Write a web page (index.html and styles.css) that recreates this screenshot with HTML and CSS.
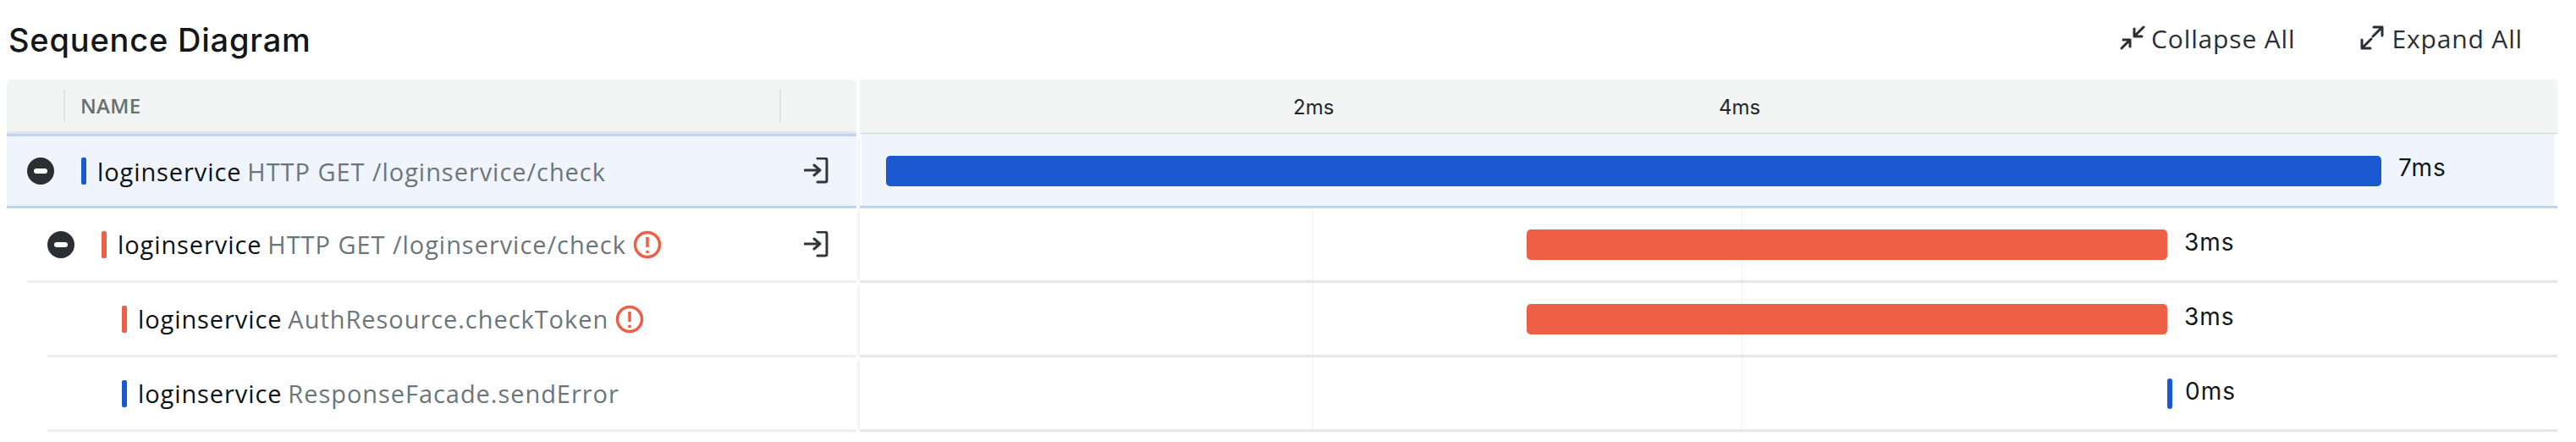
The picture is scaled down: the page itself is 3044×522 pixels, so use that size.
FILE: index.html
```html
<!DOCTYPE html>
<html lang="en">
<head>
<meta charset="utf-8">
<title>Sequence Diagram</title>
<link rel="stylesheet" href="styles.css">
</head>
<body>
<div class="page">
  <header class="top">
    <h1 class="title">Sequence Diagram</h1>
    <div class="actions">
      <button class="action">
        <svg class="action-icon" viewBox="0 0 32 32"><path d="M29 3 18 14M18 5v9h9M3 28l10-10M5 18h8v8"/></svg>
        Collapse All
      </button>
      <button class="action">
        <svg class="action-icon" viewBox="0 0 32 32"><path d="M27 3 16 14M17 3h10v10M3 28l11-11M3 18v10h10"/></svg>
        Expand All
      </button>
    </div>
  </header>

  <div class="table">
    <div class="row head">
      <div class="name-col head-name">
        <span class="head-label">NAME</span>
      </div>
      <div class="time-col head-time">
        <span class="tick tick-2">2ms</span>
        <span class="tick tick-4">4ms</span>
      </div>
    </div>

    <div class="row selected">
      <div class="name-col">
        <div class="cell depth-0">
          <span class="toggle"></span>
          <span class="mark blue"></span>
          <span class="svc">loginservice</span>
          <span class="op">HTTP GET /loginservice/check</span>
          <svg class="exit" viewBox="0 0 30 32"><path d="M1 15h18M12 9l7 6-7 6M16 1h9a2 2 0 0 1 2 2v24a2 2 0 0 1-2 2h-9"/></svg>
        </div>
      </div>
      <div class="time-col">
        <div class="track">
          <span class="bar blue" style="margin-left:31px;width:1767px"></span>
          <span class="dur">7ms</span>
        </div>
      </div>
    </div>

    <div class="row">
      <div class="name-col">
        <div class="cell depth-1 ruled">
          <span class="toggle"></span>
          <span class="mark orange"></span>
          <span class="svc">loginservice</span>
          <span class="op">HTTP GET /loginservice/check</span>
          <svg class="err" viewBox="0 0 34 34"><circle cx="17" cy="17" r="14.5"/><path d="M17 8v12M17 24v3"/></svg>
          <svg class="exit" viewBox="0 0 30 32"><path d="M1 15h18M12 9l7 6-7 6M16 1h9a2 2 0 0 1 2 2v24a2 2 0 0 1-2 2h-9"/></svg>
        </div>
      </div>
      <div class="time-col">
        <div class="track gridded">
          <span class="bar orange" style="margin-left:788px;width:757px"></span>
          <span class="dur">3ms</span>
        </div>
      </div>
    </div>

    <div class="row">
      <div class="name-col">
        <div class="cell depth-2 ruled">
          <span class="mark orange"></span>
          <span class="svc">loginservice</span>
          <span class="op">AuthResource.checkToken</span>
          <svg class="err" viewBox="0 0 34 34"><circle cx="17" cy="17" r="14.5"/><path d="M17 8v12M17 24v3"/></svg>
        </div>
      </div>
      <div class="time-col">
        <div class="track gridded">
          <span class="bar orange" style="margin-left:788px;width:757px"></span>
          <span class="dur">3ms</span>
        </div>
      </div>
    </div>

    <div class="row">
      <div class="name-col">
        <div class="cell depth-2 ruled">
          <span class="mark blue"></span>
          <span class="svc">loginservice</span>
          <span class="op">ResponseFacade.sendError</span>
        </div>
      </div>
      <div class="time-col">
        <div class="track gridded">
          <span class="bar blue" style="margin-left:1545px;width:6px"></span>
          <span class="dur dur-tight">0ms</span>
        </div>
      </div>
    </div>
  </div>
</div>
</body>
</html>
```
FILE: styles.css
```css
* { box-sizing: border-box; }
html, body { margin: 0; background: #fff; }
body { font-family: "Open Sans", "Liberation Sans", sans-serif; color: #111; }

.page { width: 3044px; height: 522px; padding: 0 22px 0 8px; overflow: hidden; }

.top { display: flex; align-items: center; justify-content: space-between; height: 94px; padding: 0 0 0 2px; }
.title { margin: 0; font-family: "Inter", sans-serif; font-size: 38px; font-weight: 500; letter-spacing: .8px; color: #14171a; }
.actions { display: flex; gap: 76px; padding: 0 41px 4px 0; }
.action { display: flex; align-items: center; gap: 6px; padding: 0; border: 0; background: none; font-family: "Open Sans", sans-serif; font-size: 30px; letter-spacing: .85px; color: #2b2f33; }
.action-icon { width: 32px; height: 32px; fill: none; stroke: #2b2f33; stroke-width: 3; stroke-linecap: round; stroke-linejoin: round; }

.row { display: flex; height: 88px; }
.name-col { width: 1004px; flex: none; }
.time-col { flex: 1; margin-left: 4px; position: relative; }

.head { height: 64px; }
.head-name { display: flex; align-items: center; background: #f3f5f4; border-bottom: 3px solid #e4e6e5; border-radius: 6px 6px 0 0; position: relative; }
.head-name::before, .head-name::after { content: ""; position: absolute; top: 12px; width: 2px; height: 38px; background: #e2e4e3; }
.head-name::before { left: 67px; }
.head-name::after { left: 913px; }
.head-label { margin-left: 87px; font-size: 24px; font-weight: 600; color: #667176; letter-spacing: .3px; }
.head-time { background: #f3f5f4; border-bottom: 1px solid #bcd3f9; }
.tick { position: absolute; top: 18px; font-size: 24px; font-family: "Inter", sans-serif; color: #23272a; }
.tick-2 { left: 512px; }
.tick-4 { left: 1015px; }

.selected .name-col { background: #f0f4fd; border-top: 3px solid #bcd3f9; border-bottom: 3px solid #bcd3f9; }
.selected .name-col .cell { border: 0; height: 82px; }
.selected .time-col { border-bottom: 3px solid #bcd3f9; box-shadow: -4px 0 4px -2px #eee; }
.selected .track { background: #f0f4fd; margin: 0 4px 0 2px; height: 85px; }
.selected .track .bar { margin-top: 2px; transform: translateX(-2px); }
.selected .track .dur { transform: translateX(-2px); }

.cell { display: flex; align-items: center; height: 88px; padding-right: 32px; }
.ruled { border-bottom: 3px solid #efefef; }
.depth-0 { padding-left: 24px; }
.depth-1 { margin-left: 24px; padding-left: 24px; }
.depth-2 { margin-left: 48px; padding-left: 88px; }

.toggle { width: 32px; height: 32px; flex: none; border-radius: 50%; background: #2b2f33; position: relative; margin-right: 32px; }
.toggle::after { content: ""; position: absolute; left: 8px; top: 13px; width: 16px; height: 6px; border-radius: 3px; background: #fff; }
.mark { width: 6px; height: 32px; flex: none; border-radius: 2px; margin-right: 13px; }
.blue { background: #1b59d0; }
.orange { background: #ed5f47; }
.svc { font-size: 29px; font-weight: 500; color: #0e1114; margin-right: 7px; letter-spacing: .9px; }
.op { font-size: 29px; color: #6b767b; letter-spacing: .95px; }
.err { width: 34px; height: 34px; flex: none; margin-left: 8px; fill: none; stroke: #ed5f47; stroke-width: 3.5; }
.exit { width: 30px; height: 32px; flex: none; margin-left: auto; fill: none; stroke: #33373a; stroke-width: 3; stroke-linecap: round; stroke-linejoin: round; }

.track { display: flex; align-items: center; height: 88px; position: relative; }
.gridded { border-bottom: 3px solid #e6e6e6; box-shadow: -4px 0 4px -2px #eee; }
.gridded::before, .gridded::after { content: ""; position: absolute; top: 0; bottom: 0; width: 1px; background: #f1f2f2; }
.gridded::before { left: 535px; }
.gridded::after { left: 1042px; }
.bar { height: 36px; border-radius: 5px; flex: none; position: relative; z-index: 1; }
.dur { margin-left: 20px; margin-bottom: 6px; font-family: "Inter", sans-serif; font-size: 28px; letter-spacing: 1px; color: #14171a; }
.dur-tight { margin-left: 15px; }
```
